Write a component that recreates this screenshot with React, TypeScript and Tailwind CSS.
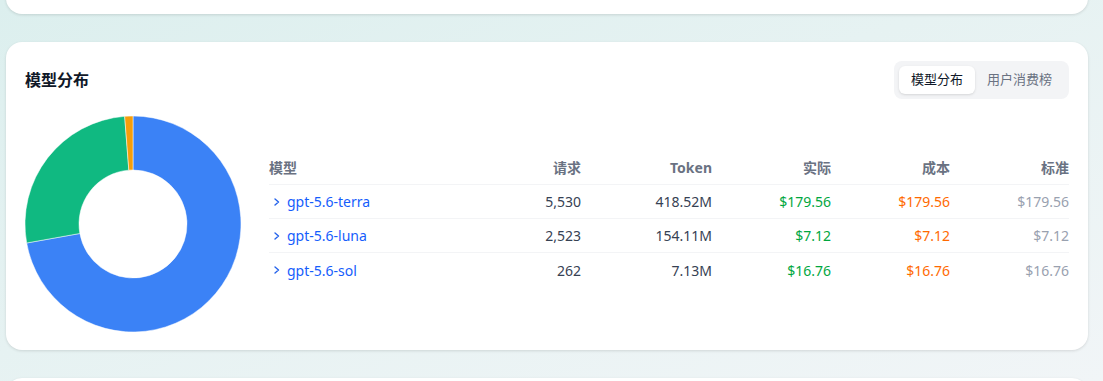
import React from 'react'

const rows = [
  { name: 'gpt-5.6-terra', req: '5,530', token: '418.52M', tokens: 418.52, actual: '$179.56', cost: '$179.56', std: '$179.56' },
  { name: 'gpt-5.6-luna', req: '2,523', token: '154.11M', tokens: 154.11, actual: '$7.12', cost: '$7.12', std: '$7.12' },
  { name: 'gpt-5.6-sol', req: '262', token: '7.13M', tokens: 7.13, actual: '$16.76', cost: '$16.76', std: '$16.76' },
]

const colors = ['#3b82f6', '#10b981', '#f59e0b']

function arcPath(cx: number, cy: number, r0: number, r1: number, a0: number, a1: number): string {
  const pt = (r: number, a: number) => [cx + r * Math.sin(a), cy - r * Math.cos(a)]
  const large = a1 - a0 > Math.PI ? 1 : 0
  const [x0, y0] = pt(r1, a0)
  const [x1, y1] = pt(r1, a1)
  const [x2, y2] = pt(r0, a1)
  const [x3, y3] = pt(r0, a0)
  return `M${x0} ${y0} A${r1} ${r1} 0 ${large} 1 ${x1} ${y1} L${x2} ${y2} A${r0} ${r0} 0 ${large} 0 ${x3} ${y3} Z`
}

function Donut() {
  const total = rows.reduce((a, r) => a + r.tokens, 0)
  let acc = 0
  return (
    <svg width="216" height="216" viewBox="0 0 216 216" className="shrink-0">
      {rows.map((r, i) => {
        const a0 = (acc / total) * Math.PI * 2
        acc += r.tokens
        const a1 = (acc / total) * Math.PI * 2
        return <path key={r.name} d={arcPath(108, 108, 54, 108, a0, a1)} fill={colors[i]} stroke="#fff" strokeWidth="0.5" />
      })}
    </svg>
  )
}

function Chevron() {
  return (
    <svg width="10" height="10" viewBox="0 0 10 10" className="mr-[5px] ml-[3px]">
      <path d="M3 2 L6.5 5 L3 8" fill="none" stroke="#2563eb" strokeWidth="1.4" strokeLinecap="round" strokeLinejoin="round" />
    </svg>
  )
}

export default function App() {
  const cols = 'grid grid-cols-[1fr_120px_131px_119px_119px_119px]'
  return (
    <div
      className="h-[381px] overflow-hidden bg-[linear-gradient(160deg,#dcefee_0%,#e6f2f2_45%,#f1f5f7_100%)] pl-[6px] pr-[15px]"
      style={{ fontFamily: '"Noto Sans", "Noto Sans CJK SC", sans-serif' }}
    >
      <div className="-mt-[46px] h-[60px] rounded-2xl bg-white shadow-[0_1px_3px_rgba(0,0,0,0.12)]" />

      <section className="mt-[28px] h-[308px] rounded-2xl bg-white px-[19px] pt-[19px] shadow-[0_1px_3px_rgba(0,0,0,0.12)]">
        <div className="flex items-center justify-between">
          <h2 className="text-[16px] font-bold text-gray-900">模型分布</h2>
          <div className="flex rounded-lg bg-gray-100 p-[5px] text-[13px]">
            <span className="rounded-md bg-white px-3 py-[4px] text-gray-900 shadow-sm">模型分布</span>
            <span className="px-3 py-[4px] text-gray-500">用户消费榜</span>
          </div>
        </div>

        <div className="mt-[17px] flex items-center gap-[28px]">
          <Donut />
          <div className="flex-1 -mt-[9px]">
            <div className={`${cols} h-[34px] items-center border-b border-gray-100 text-[14px] font-bold text-gray-500`}>
              <span>模型</span>
              <span className="text-right">请求</span>
              <span className="text-right">Token</span>
              <span className="text-right">实际</span>
              <span className="text-right">成本</span>
              <span className="text-right">标准</span>
            </div>
            {rows.map((r, i) => (
              <div
                key={r.name}
                className={`${cols} h-[34px] items-center text-[14px] ${i < rows.length - 1 ? 'border-b border-gray-100' : ''}`}
              >
                <span className="flex items-center text-blue-600">
                  <Chevron />
                  {r.name}
                </span>
                <span className="text-right text-gray-700">{r.req}</span>
                <span className="text-right text-gray-700">{r.token}</span>
                <span className="text-right text-green-600">{r.actual}</span>
                <span className="text-right text-orange-500">{r.cost}</span>
                <span className="text-right text-gray-400">{r.std}</span>
              </div>
            ))}
          </div>
        </div>
      </section>

      <div className="mt-[28px] h-[60px] rounded-2xl bg-white shadow-[0_1px_3px_rgba(0,0,0,0.12)]" />
    </div>
  )
}
